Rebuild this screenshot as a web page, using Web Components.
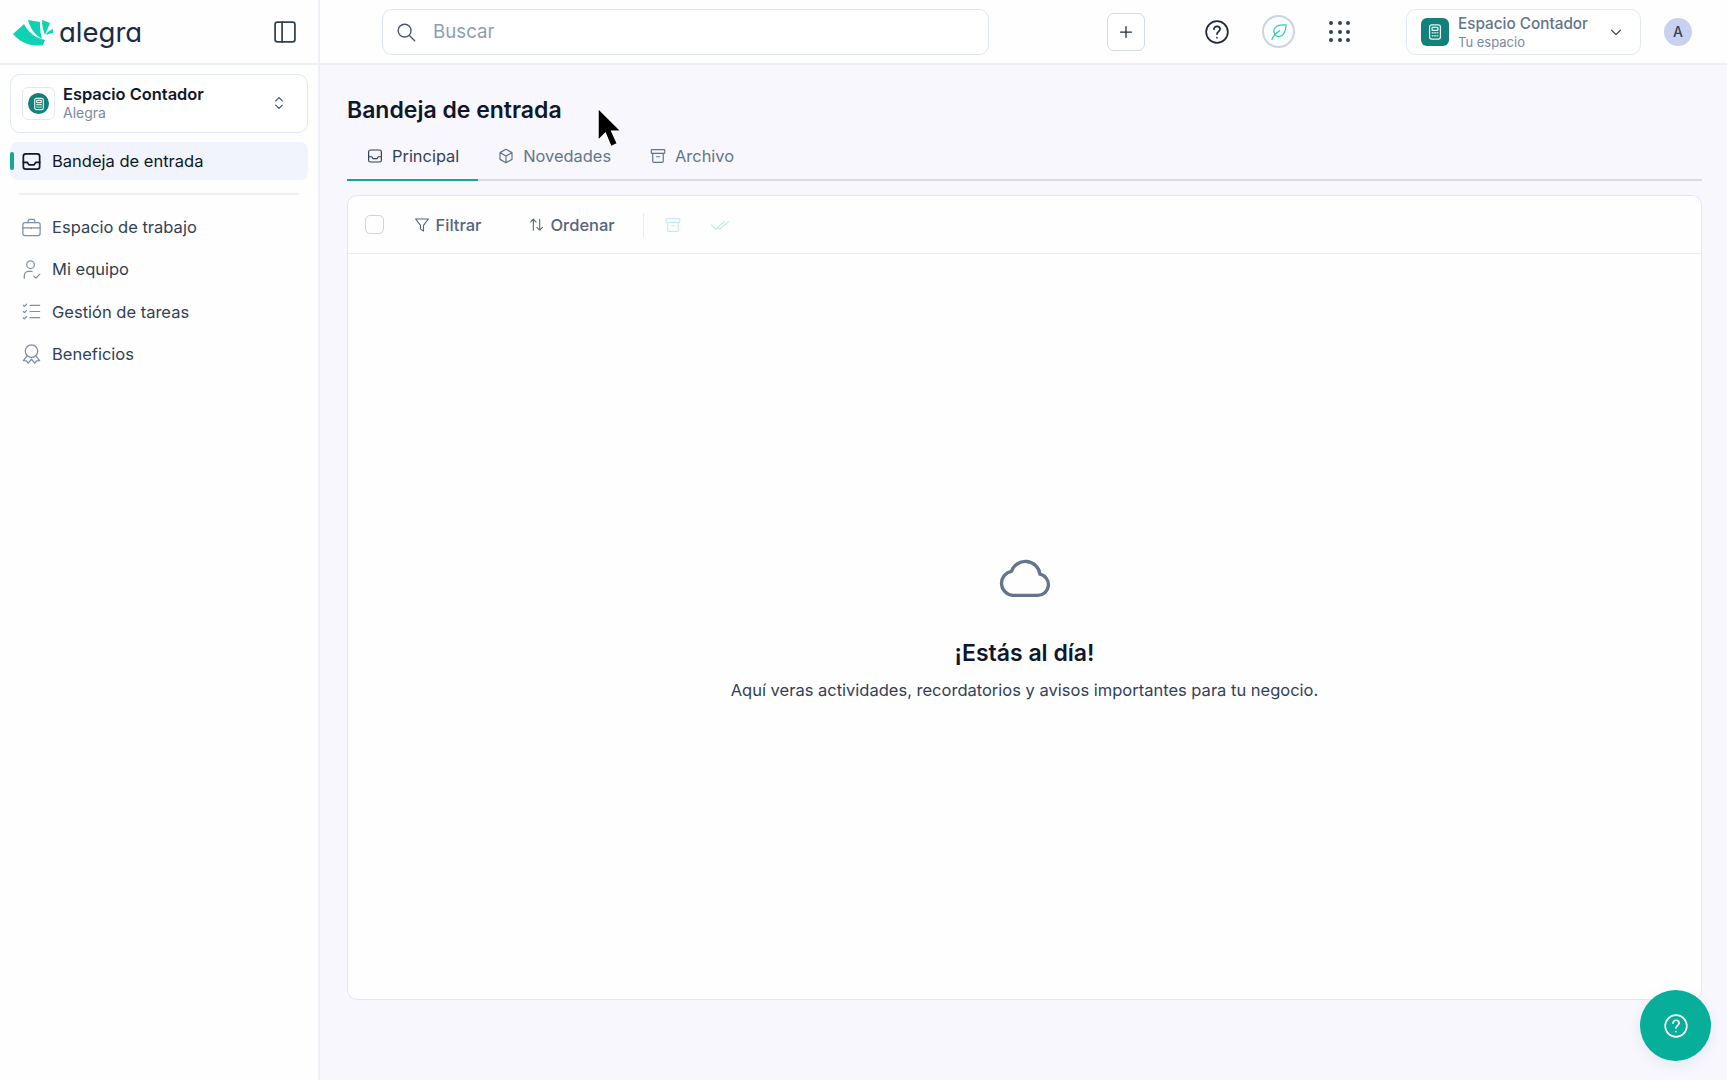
<!DOCTYPE html>
<html lang="es">
<head>
<meta charset="utf-8">
<title>Alegra</title>
<style>
  html, body { margin: 0; height: 100%; background: #f7f7fd; }
  body { font-family: Inter, "Liberation Sans", sans-serif; color: #0f172a; }
</style>
</head>
<body>
<al-app></al-app>
<script>
const ICONS = {
  panel: '<rect x="3.5" y="3.5" width="17" height="17" rx="2"/><path d="M9.5 3.5v17"/>',
  inbox: '<rect x="3.5" y="4" width="17" height="16" rx="2.5"/><path d="M3.5 13h4.2l1.6 2.5h5.4l1.6-2.5h4.2"/>',
  updown: '<path d="M8 9.5l4-4 4 4M8 14.5l4 4 4-4"/>',
  briefcase: '<rect x="3" y="7" width="18" height="13.5" rx="2.2"/><path d="M8.5 7V5.2c0-1 .8-1.7 1.7-1.7h3.6c1 0 1.7.8 1.7 1.7V7M3 12.5h18M12 12v1"/>',
  team: '<circle cx="11" cy="7" r="4"/><path d="M4.5 21v-2.5c0-2.6 2-4.5 4.5-4.5h3.5M14.5 19l2.2 2 4-4.2"/>',
  tasks: '<path d="M3.5 5.5l1.2 1.2 2.2-2.4M3.5 12l1.2 1.2 2.2-2.4M3.5 18.5l1.2 1.2 2.2-2.4M10.5 5.5h10M10.5 12h10M10.5 18.5h10"/>',
  award: '<circle cx="12" cy="9.5" r="6.5"/><path d="M7.5 14.5L3.5 19.5l3.3.2 1.7 2.3 3.5-4 3.5 4 1.7-2.3 3.3-.2-4-5"/>',
  search: '<circle cx="10.5" cy="10.5" r="7"/><path d="M16 16l5.5 5.5"/>',
  plus: '<path d="M12 5.5v13M5.5 12h13"/>',
  help: '<circle cx="12" cy="12" r="10"/><path d="M9.2 9.4c0-1.6 1.3-2.7 2.8-2.7s2.8 1.1 2.8 2.6c0 2.3-2.8 2.3-2.8 4.6M12 17.2v.1"/>',
  leaf: '<path d="M20.5 3.5c-6-.5-13 0-14.500 6-1 4 1.500 8 5.500 8 5 0 8.500-5 9-14zM3.500 21c2-5 5-8 9.500-10.500"/>',
  down: '<path d="M6 9.500l6 6 6-6"/>',
  box: '<path d="M12 3l8 4.500v9L12 21l-8-4.500v-9zM4 7.500l8 4.500 8-4.500M12 12v9"/>',
  archive: '<rect x="3" y="3.500" width="18" height="5" rx="1"/><path d="M5 8.500v10.500a1.500 1.500 0 0 0 1.500 1.500h11a1.500 1.500 0 0 0 1.500-1.500V8.500M10 13h4"/>',
  filter: '<path d="M3.500 4h17l-6.500 8.500V20l-4-2.500v-5z"/>',
  sort: '<path d="M7.500 20V4.500M3.500 8.500l4-4 4 4M16.500 4.500V20M12.500 16l4 4 4-4"/>',
  checks: '<path d="M2 12l5 5L17 8M9 15l2.500 2L22 8"/>',
  cloud: '<path d="M7 19.500h10.500a4.500 4.500 0 0 0 1-8.900 6.200 6.200 0 0 0-12-1.200A5.100 5.100 0 0 0 7 19.500z"/>',
  calc: '<rect x="5.500" y="3.500" width="13" height="17" rx="2.500"/><rect x="8.500" y="6.500" width="7" height="3.500" rx=".5"/><path d="M8.500 13h1.200M11.400 13h1.200M14.300 13h1.200M8.500 16.500h1.200M11.400 16.500h1.200M14.300 16.500h1.200"/>'
};

class AlIcon extends HTMLElement {
  constructor() {
    super();
    const name = this.getAttribute('name');
    const size = this.getAttribute('size') || 20;
    const stroke = this.getAttribute('stroke') || 1.5;
    this.attachShadow({ mode: 'open' }).innerHTML = `
      <style>
        :host { display: inline-flex; flex: none; width: ${size}px; height: ${size}px; color: inherit; }
        svg { width: 100%; height: 100%; fill: none; stroke: currentColor; stroke-linecap: round; stroke-linejoin: round; }
      </style>
      <svg viewBox="0 0 24 24" stroke-width="${stroke}">${ICONS[name]}</svg>`;
  }
}
customElements.define('al-icon', AlIcon);

class AlLogo extends HTMLElement {
  constructor() {
    super();
    this.attachShadow({ mode: 'open' }).innerHTML = `
      <style>
        :host { display: flex; align-items: center; gap: 5px; }
        svg { width: 41px; height: 32px; fill: #0ed3b3; }
        span {
          font: 400 27.500px/32px Inter, sans-serif;
          font-feature-settings: "cv11";
          color: #1c2b45;
        }
      </style>
      <svg viewBox="0 0 41 32">
        <path d="M0 18L11 8c4 8 11 14 21 16l-2 5C18 31 8 27 0 18z"/>
        <path d="M15 4l12 2c0 6 .5 12 2 17C22 19 17 12 15 4z"/>
        <path d="M29 4l8 3-5 12c-2-5-3-10-3-15z"/>
        <path d="M33.500 17.500c1.500-1.500 3.500-3.500 6.500-4.500v4c-2.500 0-4.500 1-6 2z"/>
      </svg>
      <span>alegra</span>`;
  }
}
customElements.define('al-logo', AlLogo);

class AlNavItem extends HTMLElement {
  constructor() {
    super();
    const icon = this.getAttribute('icon');
    this.attachShadow({ mode: 'open' }).innerHTML = `
      <style>
        :host {
          display: flex; position: relative; align-items: center; gap: 9px;
          height: 38px; padding-left: 10px; border-radius: 8px;
          font-size: 16.500px; color: #334155;
        }
        :host([active]) { background: #f1f4fc; color: #0f172a; }
        :host([active])::before {
          content: ""; position: absolute; left: 0; top: 10px;
          width: 4px; height: 18px; border-radius: 2px; background: #14a697;
        }
        al-icon { color: #7f8ea6; }
        :host([active]) al-icon { color: #0f172a; }
      </style>
      <al-icon name="${icon}" size="23" stroke="${this.hasAttribute('active') ? 1.8 : 1.3}"></al-icon>
      <slot></slot>`;
  }
}
customElements.define('al-nav-item', AlNavItem);

class AlSidebar extends HTMLElement {
  constructor() {
    super();
    this.attachShadow({ mode: 'open' }).innerHTML = `
      <style>
        :host { display: flex; flex-direction: column; background: #fefefe; border-right: 2px solid #eef0f8; box-sizing: border-box; }
        .brand { display: flex; align-items: center; justify-content: space-between; height: 63px; padding: 0 19px 0 13px; border-bottom: 2px solid #eef0f8; box-sizing: content-box; }
        .brand > al-icon { color: #334155; }
        .body { display: flex; flex-direction: column; padding: 9px 10px 8px; }
        .space { display: flex; align-items: center; height: 57px; border: 1px solid #e2e8f5; border-radius: 10px; padding: 0 18px 0 11px; background: #fff; }
        .tile { display: flex; align-items: center; justify-content: center; width: 31px; height: 31px; border: 1px solid #e2e8f5; border-radius: 6px; margin-right: 8px; }
        .dot { display: flex; align-items: center; justify-content: center; width: 21px; height: 21px; border-radius: 50%; background: #14807a; color: #dff3f0; }
        .txt { flex: 1; min-width: 0; padding-bottom: 2px; }
        .name { font-size: 16.400px; font-weight: 600; line-height: 19px; color: #0f172a; }
        .sub { font-size: 14px; line-height: 17px; color: #7a8aa3; }
        .chev { color: #475569; margin-bottom: 1px; }
        .active { margin-top: 9px; }
        hr { border: 0; border-top: 2px solid #eef0f6; margin: 13px 9px 13px; }
        .list { display: flex; flex-direction: column; gap: 4.300px; }
      </style>
      <div class="brand">
        <al-logo></al-logo>
        <al-icon name="panel" size="28"></al-icon>
      </div>
      <div class="body">
        <div class="space">
          <div class="tile"><div class="dot"><al-icon name="calc" size="16" stroke="1.700"></al-icon></div></div>
          <div class="txt"><div class="name">Espacio Contador</div><div class="sub">Alegra</div></div>
          <al-icon class="chev" name="updown" size="20"></al-icon>
        </div>
        <al-nav-item class="active" icon="inbox" active>Bandeja de entrada</al-nav-item>
        <hr>
        <div class="list">
          <al-nav-item icon="briefcase">Espacio de trabajo</al-nav-item>
          <al-nav-item icon="team">Mi equipo</al-nav-item>
          <al-nav-item icon="tasks">Gestión de tareas</al-nav-item>
          <al-nav-item icon="award">Beneficios</al-nav-item>
        </div>
      </div>`;
  }
}
customElements.define('al-sidebar', AlSidebar);

class AlTopbar extends HTMLElement {
  constructor() {
    super();
    let dots = '';
    for (let i = 0; i < 9; i++) dots += '<i></i>';
    this.attachShadow({ mode: 'open' }).innerHTML = `
      <style>
        :host { display: flex; align-items: center; height: 63px; box-sizing: content-box; border-bottom: 2px solid #eef0f8; background: #fefefe; padding-left: 62px; }
        .search { display: flex; align-items: center; gap: 16px; width: 607px; height: 46px; box-sizing: border-box; padding: 0 12px; border: 1px solid #dfe5f3; border-radius: 10px; background: #fff; color: #475569; }
        .search span { font-size: 18.700px; color: #8e9db5; }
        .plus { display: flex; align-items: center; justify-content: center; width: 38px; height: 38px; box-sizing: border-box; margin-left: 118px; border: 1px solid #d3daee; border-radius: 7px; color: #1e293b; background: #fff; }
        .help { margin-left: 59px; color: #1e293b; }
        .leaf { display: flex; align-items: center; justify-content: center; width: 33px; height: 33px; box-sizing: border-box; margin-left: 32px; border: 2px solid #cbd3e6; border-radius: 50%; color: #2fd0b4; }
        .apps { display: grid; grid-template-columns: repeat(3, 4px); gap: 4.500px; margin-left: 34px; }
        .apps i { width: 4px; height: 4px; border-radius: 50%; background: #334155; }
        .space { display: flex; align-items: center; width: 235px; height: 46px; box-sizing: border-box; margin-left: 56px; padding: 0 15px 0 14px; border: 1px solid #e2e8f5; border-radius: 10px; background: #fff; }
        .tile { display: flex; align-items: center; justify-content: center; width: 28px; height: 28px; border-radius: 6px; background: #14807a; color: #e3f5f2; margin-right: 9px; }
        .txt { flex: 1; }
        .name { font-size: 15.300px; line-height: 20px; color: #64748b; font-weight: 500; }
        .sub { font-size: 13px; line-height: 16px; color: #7a8aa3; }
        .space > al-icon { color: #334155; }
        .avatar { display: flex; align-items: center; justify-content: center; width: 28px; height: 28px; margin-left: 23px; border-radius: 50%; background: #c8d2ef; color: #334155; font-size: 14px; font-weight: 500; }
      </style>
      <div class="search"><al-icon name="search" size="22"></al-icon><span>Buscar</span></div>
      <div class="plus"><al-icon name="plus" size="20"></al-icon></div>
      <al-icon class="help" name="help" size="26" stroke="1.600"></al-icon>
      <div class="leaf"><al-icon name="leaf" size="20"></al-icon></div>
      <div class="apps">${dots}</div>
      <div class="space">
        <div class="tile"><al-icon name="calc" size="20"></al-icon></div>
        <div class="txt"><div class="name">Espacio Contador</div><div class="sub">Tu espacio</div></div>
        <al-icon name="down" size="18" stroke="1.800"></al-icon>
      </div>
      <div class="avatar">A</div>`;
  }
}
customElements.define('al-topbar', AlTopbar);

class AlTab extends HTMLElement {
  constructor() {
    super();
    const icon = this.getAttribute('icon');
    this.attachShadow({ mode: 'open' }).innerHTML = `
      <style>
        :host { display: flex; align-items: center; gap: 8px; height: 47px; padding: 0 19px 2px; margin-bottom: -2px; box-sizing: border-box; border-bottom: 2px solid transparent; font-size: 16.400px; color: #64748b; }
        :host([active]) { border-bottom-color: #14a697; color: #334155; }
      </style>
      <al-icon name="${icon}" size="18" stroke="1.600"></al-icon>
      <slot></slot>`;
  }
}
customElements.define('al-tab', AlTab);

class AlInbox extends HTMLElement {
  constructor() {
    super();
    this.attachShadow({ mode: 'open' }).innerHTML = `
      <style>
        :host { display: flex; flex-direction: column; height: 805px; box-sizing: border-box; background: #fefefe; border: 1px solid #e3e7f2; border-radius: 10px; }
        .bar { display: flex; align-items: center; height: 58px; box-sizing: border-box; padding: 0 0 0 17px; border-bottom: 1px solid #e8ebf4; flex: none; }
        .check { width: 19px; height: 19px; box-sizing: border-box; border: 1.500px solid #ccd5e6; border-radius: 5px; }
        .btn { display: flex; align-items: center; gap: 5px; font-size: 16.500px; font-weight: 500; color: #56657c; }
        .filter { margin-left: 28.500px; }
        .sort { margin-left: 47px; }
        .sep { width: 1px; height: 24px; background: #e8ebf4; margin: 0 20px 0 28px; }
        .off { color: #c6ebe8; }
        .off + .off { margin-left: 28px; }
        .empty { flex: 1; display: flex; flex-direction: column; align-items: center; padding-top: 294.500px; }
        .empty al-icon { color: #64748b; }
        h2 { margin: 32px 0 0; font-size: 23px; line-height: 30px; font-weight: 600; color: #0f172a; }
        p { margin: 9px 0 0; font-size: 16.500px; line-height: 26px; color: #334155; }
      </style>
      <div class="bar">
        <div class="check"></div>
        <div class="btn filter"><al-icon name="filter" size="18" stroke="1.500"></al-icon>Filtrar</div>
        <div class="btn sort"><al-icon name="sort" size="17" stroke="1.500"></al-icon>Ordenar</div>
        <div class="sep"></div>
        <al-icon class="off" name="archive" size="18" stroke="1.500"></al-icon>
        <al-icon class="off" name="checks" size="20" stroke="1.500"></al-icon>
      </div>
      <div class="empty">
        <al-icon name="cloud" size="57" stroke="1.400"></al-icon>
        <h2>¡Estás al día!</h2>
        <p>Aquí veras actividades, recordatorios y avisos importantes para tu negocio.</p>
      </div>`;
  }
}
customElements.define('al-inbox', AlInbox);

class AlApp extends HTMLElement {
  constructor() {
    super();
    this.attachShadow({ mode: 'open' }).innerHTML = `
      <style>
        :host { display: grid; grid-template-columns: 320px 1fr; height: 100vh; position: relative; overflow: hidden; }
        .right { display: flex; flex-direction: column; min-width: 0; }
        main { padding: 0 25px 0 27px; }
        h1 { margin: 29px 0 0; font-size: 23px; line-height: 32px; font-weight: 600; color: #0f172a; }
        .tabs { display: flex; margin-top: 8px; border-bottom: 2px solid #d7dbe7; }
        al-inbox { margin-top: 14px; }
        .fab { position: absolute; left: 1640px; top: 990px; width: 71px; height: 71px; display: flex; align-items: center; justify-content: center; border-radius: 50%; background: #07ae9a; color: #fff; box-shadow: 0 4px 14px rgba(30,60,120,.08); }
        .cursor { position: absolute; left: 596px; top: 107px; width: 27px; height: 44px; }
      </style>
      <al-sidebar></al-sidebar>
      <div class="right">
        <al-topbar></al-topbar>
        <main>
          <h1>Bandeja de entrada</h1>
          <div class="tabs">
            <al-tab icon="inbox" active>Principal</al-tab>
            <al-tab icon="box">Novedades</al-tab>
            <al-tab icon="archive">Archivo</al-tab>
          </div>
          <al-inbox></al-inbox>
        </main>
      </div>
      <div class="fab"><al-icon name="help" size="26" stroke="1.500"></al-icon></div>
      <svg class="cursor" viewBox="0 0 26 42"><path d="M2 1v31l7-7 5.500 13 6-3-5.500-12h9z" fill="#000" stroke="#fff" stroke-width="1.200"/></svg>`;
  }
}
customElements.define('al-app', AlApp);
</script>
</body>
</html>
